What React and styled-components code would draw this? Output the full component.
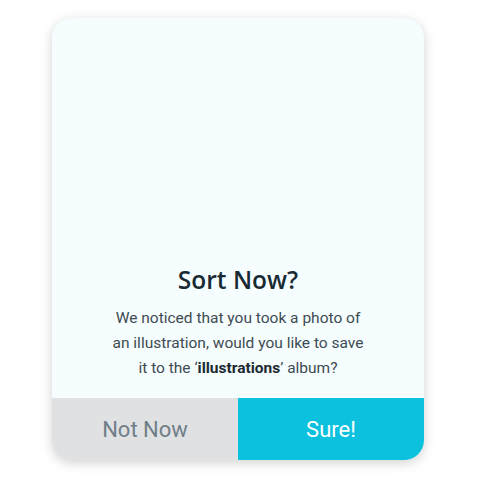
import React from "react";
import styled, { createGlobalStyle } from "styled-components";

const GlobalStyle = createGlobalStyle`
  html, body {
    margin: 0;
    padding: 0;
    background: #ffffff;
  }
  body {
    font-family: Roboto, "Liberation Sans", sans-serif;
  }
`;

const Page = styled.div`
  width: 480px;
  height: 480px;
  padding: 18px 0 0 52px;
  box-sizing: border-box;
`;

const Card = styled.div`
  width: 372px;
  height: 442px;
  border-radius: 20px;
  background: #f5fdfe;
  box-shadow: 0 3px 12px rgba(0, 0, 0, 0.18);
  overflow: hidden;
  display: flex;
  flex-direction: column;
`;

const Body = styled.div`
  flex: 1;
  display: flex;
  flex-direction: column;
  justify-content: flex-end;
  align-items: center;
  padding-bottom: 17px;
`;

const Title = styled.h2`
  margin: 0 0 11px;
  font-family: "Open Sans", Lato, sans-serif;
  font-weight: 600;
  font-size: 24.5px;
  line-height: 30px;
  color: #182a33;
`;

const Message = styled.p`
  margin: 0;
  font-size: 15.5px;
  line-height: 25px;
  color: #3e4b52;
  text-align: center;
  width: 260px;

  b {
    font-weight: 700;
    color: #1c2a31;
  }
`;

const Actions = styled.div`
  display: grid;
  grid-template-columns: 186px 1fr;
  height: 62px;
`;

const Action = styled.button`
  border: none;
  margin: 0;
  padding: 0;
  font-family: Roboto, "Liberation Sans", sans-serif;
  font-size: 22px;
  background: ${(p) => (p.$primary ? "#0cc1de" : "#dfe1e3")};
  color: ${(p) => (p.$primary ? "#ffffff" : "#6f7e87")};
  cursor: pointer;
`;

export default function App() {
  return (
    <>
      <GlobalStyle />
      <Page>
        <Card>
          <Body>
            <Title>Sort Now?</Title>
            <Message>
              We noticed that you took a photo of an illustration, would you
              like to save it to the ‘<b>illustrations</b>’ album?
            </Message>
          </Body>
          <Actions>
            <Action>Not Now</Action>
            <Action $primary>Sure!</Action>
          </Actions>
        </Card>
      </Page>
    </>
  );
}
